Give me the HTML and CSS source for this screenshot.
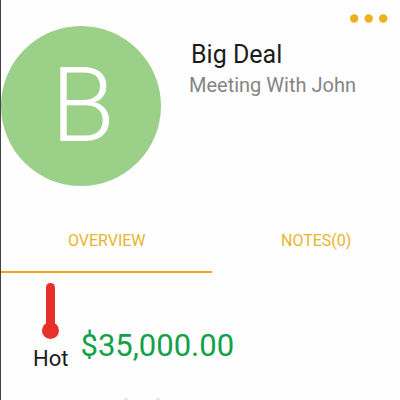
FILE: index.html
```
<!DOCTYPE html>
<html lang="en">
<head>
<meta charset="utf-8">
<meta name="viewport" content="width=device-width, initial-scale=1">
<title>Big Deal</title>
<link rel="stylesheet" href="styles.css">
</head>
<body>
<main class="deal">
  <header class="head">
    <div class="avatar" aria-hidden="true">B</div>
    <div class="info">
      <button class="more" type="button" aria-label="More options">
        <svg width="38" height="10" viewBox="0 0 38 10"><circle cx="4.200" cy="4.500" r="4.200"/><circle cx="18.700" cy="4.500" r="4.200"/><circle cx="33.200" cy="4.500" r="4.200"/></svg>
      </button>
      <h1 class="title">Big Deal</h1>
      <p class="subtitle">Meeting With John</p>
    </div>
  </header>
  <nav class="tabs">
    <button class="tab tab-active" type="button">OVERVIEW</button>
    <button class="tab" type="button">NOTES(0)</button>
  </nav>
  <section class="summary">
    <div class="rating">
      <svg width="18" height="56" viewBox="0 0 18 56" aria-hidden="true"><rect x="4" y="0" width="9" height="46" rx="4.500"/><circle cx="8.500" cy="47.500" r="8.500"/></svg>
      <span>Hot</span>
    </div>
    <div class="amount">$35,000.00</div>
  </section>
  <div class="marks" aria-hidden="true"><i></i><i></i></div>
</main>
</body>
</html>
```
FILE: styles.css
```
* { box-sizing: border-box; }
body {
  margin: 0;
  background: #fefefe;
  color: #1c1c1c;
  font-family: Roboto, "Liberation Sans", sans-serif;
}
.deal {
  min-height: 100vh;
  overflow: hidden;
  border-left: 1px solid #444;
}
.head {
  display: flex;
  gap: 28px;
  height: 211px;
}
.avatar {
  display: flex;
  align-items: center;
  justify-content: center;
  flex: none;
  width: 160px;
  height: 160px;
  margin-top: 26px;
  padding-left: 4px;
  border-radius: 50%;
  background: #9bd088;
  color: #fff;
  font-size: 104px;
  font-weight: 300;
  line-height: 160px;
}
.info {
  display: flex;
  flex-direction: column;
  flex: 1;
  padding: 14px 12px 0 0;
}
.more {
  align-self: flex-end;
  display: flex;
  padding: 0;
  border: 0;
  background: none;
  fill: #ecb11f;
}
.title {
  margin: 15px 0 0 2px;
  font-size: 25px;
  font-weight: 400;
  line-height: 32px;
}
.subtitle {
  margin: 0;
  color: #858585;
  font-size: 20px;
  line-height: 28px;
}
.tabs {
  display: grid;
  grid-template-columns: 53% 52%;
}
.tab {
  height: 62px;
  padding: 0;
  border: 0;
  border-bottom: 2px solid transparent;
  background: none;
  color: #e9b42c;
  font: 400 16px/20px Roboto, "Liberation Sans", sans-serif;
}
.tab-active { border-color: #f5a31c; }
.summary {
  display: flex;
  align-items: flex-end;
  gap: 12px;
  padding: 10px 32px 23px;
}
.rating {
  display: flex;
  flex-direction: column;
  align-items: center;
  gap: 4px;
  font-size: 22px;
  line-height: 32px;
  fill: #e8302a;
}
.amount {
  color: #12a04a;
  font-size: 31px;
  line-height: 58px;
}
.marks {
  display: flex;
  gap: 28px;
  padding-left: 123px;
}
.marks i {
  width: 4px;
  height: 2px;
  background: #e8e8e8;
}
```
